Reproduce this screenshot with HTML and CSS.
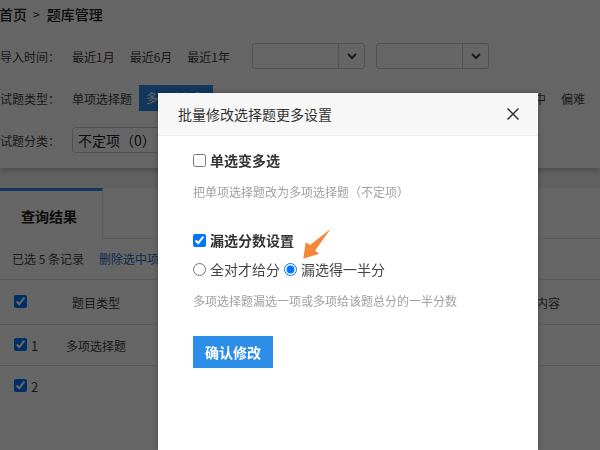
FILE: index.html
```html
<!DOCTYPE html>
<html lang="zh">
<head>
<meta charset="utf-8">
<title>批量修改选择题更多设置</title>
<link rel="stylesheet" href="styles.css">
</head>
<body>
<div class="page">
  <div class="panel">
    <div class="crumb"><b>首页</b><span class="sep">&gt;</span><b>题库管理</b></div>
    <div class="row row-time">
      <span class="label">导入时间：</span>
      <span class="opt">最近1月</span><span class="opt">最近6月</span><span class="opt">最近1年</span>
      <span class="sel s1"><i class="arr"><svg width="12" height="8" viewBox="0 0 12 8"><path d="M2 2l4 4 4-4" fill="none" stroke="#444" stroke-width="2"/></svg></i></span>
      <span class="sel s2"><i class="arr"><svg width="12" height="8" viewBox="0 0 12 8"><path d="M2 2l4 4 4-4" fill="none" stroke="#444" stroke-width="2"/></svg></i></span>
    </div>
    <div class="row row-type">
      <span class="label">试题类型：</span>
      <span class="opt">单项选择题</span>
      <span class="opt active">多项选择题</span>
      <span class="diff"><span>中</span><span>偏难</span></span>
    </div>
    <div class="row row-cat">
      <span class="label">试题分类：</span>
      <span class="cat">不定项（0）</span>
    </div>
  </div>
  <div class="results">
    <div class="tabs"><span class="tab">查询结果</span></div>
    <div class="bar">已选 5 条记录<a class="del">删除选中项</a></div>
    <div class="trow thead">
      <span class="c1"><input type="checkbox" checked></span><span class="c2">题目类型</span><span class="c3">内容</span>
    </div>
    <div class="trow tr1">
      <span class="c1"><input type="checkbox" checked>1</span><span class="c2">多项选择题</span>
    </div>
    <div class="trow tr2">
      <span class="c1"><input type="checkbox" checked>2</span>
    </div>
  </div>
</div>
<div class="mask"></div>
<div class="modal">
  <div class="head">
    <span>批量修改选择题更多设置</span>
    <svg class="close" width="14" height="14" viewBox="0 0 14 14"><path d="M1.500 1.500l11 11M12.500 1.500l-11 11" stroke="#333" stroke-width="1.500" fill="none"/></svg>
  </div>
  <div class="body">
    <label class="check"><input type="checkbox">单选变多选</label>
    <p class="hint h1">把单项选择题改为多项选择题（不定项）</p>
    <label class="check c2nd"><input type="checkbox" checked>漏选分数设置</label>
    <div class="radios">
      <label><input type="radio" name="m">全对才给分</label>
      <label><input type="radio" name="m" checked>漏选得一半分</label>
      <svg class="arrow" width="34" height="36" viewBox="0 0 34 36"><path d="M30.500 3 L15 24.700 L19.300 27.700 L3.300 32.700 L5.700 16.300 L10 19 Z" fill="#f5873a"/></svg>
    </div>
    <p class="hint h2">多项选择题漏选一项或多项给该题总分的一半分数</p>
    <button class="ok" type="button">确认修改</button>
  </div>
</div>
</body>
</html>
```
FILE: styles.css
```css
* { box-sizing: border-box; }
html, body { margin: 0; padding: 0; height: 450px; overflow: hidden; }
body { font-family: "Noto Sans CJK SC", "Liberation Sans", sans-serif; font-size: 12px; color: #444; background: #f0f0f0; }
input { margin: 0; }
.page { width: 600px; height: 450px; background: #f2f2f2; overflow: hidden; }
.panel { height: 168px; background: #fff; padding-top: 4px; box-shadow: 0 2px 6px rgba(0,0,0,.25); position: relative; }
.crumb { height: 20px; line-height: 20px; color: #222; font-size: 14px; display: flex; margin-left: -1px; }
.crumb b { font-weight: 500; }
.sep { margin: 0 7px 0 6px; font-size: 12px; }
.row { display: flex; align-items: center; position: relative; }
.row-time { margin-top: 19px; height: 26px; }
.row-type { margin-top: 16px; height: 26px; }
.row-cat { margin-top: 16px; height: 26px; }
.label { width: 72px; flex: none; color: #444; }
.opt { margin-right: 15px; white-space: nowrap; }
.s1 { margin-left: 7px; width: 113px; }
.s2 { margin-left: 11px; width: 113px; }
.sel { height: 26px; border: 1px solid #ccc; border-radius: 3px; display: flex; justify-content: flex-end; flex: none; }
.arr { width: 26px; border-left: 1px solid #ccc; display: flex; align-items: center; justify-content: center; }
.active { background: #2d8ee8; color: #fff; height: 26px; line-height: 26px; padding: 0 7px; margin-left: -8px; }
.diff { position: absolute; left: 534px; display: flex; gap: 15px; white-space: nowrap; }
.cat { width: 120px; height: 26px; line-height: 24px; border: 1px solid #ccc; border-radius: 3px; padding-left: 5px; font-size: 14px; color: #222; }
.results { margin-top: 20px; height: 262px; background: #fff; }
.tabs { height: 51px; border-bottom: 1px solid #ddd; }
.tab { display: block; width: 103px; height: 51px; border-top: 3px solid #2d8ee8; border-right: 1px solid #ddd; background: #fff; padding-left: 21px; line-height: 50px; font-weight: 700; font-size: 14px; color: #222; }
.bar { height: 41px; line-height: 40px; padding-left: 12px; border-bottom: 1px solid #ddd; }
.del { margin-left: 15px; color: #2b6cc4; }
.trow { display: flex; align-items: center; border-bottom: 1px solid #ddd; position: relative; }
.thead { height: 45px; }
.tr1 { height: 41px; }
.tr2 { height: 41px; border-bottom: 0; }
.c1 { width: 60px; padding-left: 14px; display: flex; align-items: center; gap: 4px; font-size: 13px; }
.c1 input { width: 13px; height: 13px; margin-top: -2px; }
.c2 { width: 72px; text-align: center; white-space: nowrap; }
.c3 { position: absolute; left: 536px; }
.mask { position: fixed; left: 0; top: 0; width: 600px; height: 450px; background: rgba(0,0,0,.6); }
.modal { position: fixed; left: 158px; top: 93px; width: 380px; height: 357px; background: #fff; box-shadow: 0 0 6px rgba(0,0,0,.3); }
.head { height: 43px; background: #f7f7f7; border-bottom: 1px solid #eee; padding: 0 18px 0 20px; display: flex; align-items: center; justify-content: space-between; font-size: 14px; color: #333; }
.body { padding: 14px 35px 0; }
.check { display: flex; align-items: center; gap: 4px; height: 20px; font-size: 14px; font-weight: 700; color: #333; }
.check input { width: 13px; height: 13px; }
.hint { margin: 0; font-size: 12px; color: #a0a0a0; line-height: 20px; }
.h1 { margin-top: 12px; }
.c2nd { margin-top: 28px; }
.radios { display: flex; gap: 4px; margin-top: 9px; height: 20px; position: relative; font-size: 14px; color: #444; }
.radios label { display: flex; align-items: center; gap: 4px; }
.radios input { width: 13px; height: 13px; }
.arrow { position: absolute; left: 107px; top: -33px; }
.h2 { margin-top: 12px; }
.ok { display: block; margin-top: 25px; width: 80px; height: 32px; background: #2d8ee8; color: #fff; border: 0; font: 700 14px "Noto Sans CJK SC", sans-serif; padding: 0; }
```
